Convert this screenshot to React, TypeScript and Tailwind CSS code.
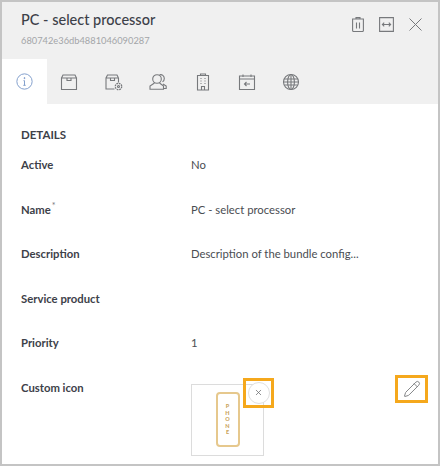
import { Pencil, X } from 'lucide-react';

const rows = [
  { label: 'Active', value: 'No' },
  { label: 'Name', value: 'PC - select processor', required: true },
  { label: 'Description', value: 'Description of the bundle config...' },
  { label: 'Service product', value: '' },
  { label: 'Priority', value: '1' },
];

const iconClass = 'w-[18px] h-[18px] text-[#77797c]';

function InfoIcon() {
  return (
    <svg viewBox="0 0 20 20" fill="none" stroke="#7c9ac9" strokeWidth="1.1" className="w-[17px] h-[17px]">
      <circle cx="10" cy="10" r="9" />
      <path d="M10 9v5.5M8.6 14.5h2.8M8.8 9H10" />
      <circle cx="10" cy="6" r="0.6" fill="#7c9ac9" />
    </svg>
  );
}

function BoxIcon() {
  return (
    <svg viewBox="0 0 18 18" fill="none" stroke="currentColor" strokeWidth="1.1" className={iconClass}>
      <path d="M1.5 5 3 2h12l1.5 3M1.5 5h15v11.5h-15z" />
      <path d="M7 5v2.5h4V5" />
    </svg>
  );
}

function BoxGearIcon() {
  return (
    <svg viewBox="0 0 18 18" fill="none" stroke="currentColor" strokeWidth="1.1" className={iconClass}>
      <path d="M1 5 2.500 2h9.500l1.500 3M13.500 5v4.500M9.500 16H1V5h12.500" />
      <path d="M5.500 5v2.500h4V5" />
      <circle cx="13.500" cy="13.500" r="3.200" strokeDasharray="1.700 0.800" strokeWidth="1.300" />
      <circle cx="13.500" cy="13.500" r="1" />
    </svg>
  );
}

function UsersIcon() {
  return (
    <svg viewBox="0 0 18 18" fill="none" stroke="currentColor" strokeWidth="1.1" className={iconClass}>
      <circle cx="8" cy="6" r="4.3" />
      <path d="M10.500 1.800c2.500-.8 4.800 1 4.800 3.600 0 1.500-.6 2.700-1.800 3.500M5.500 10 1 13v3.200h13.500V13L10.500 10M14 11l3.200 2v2.500h-2.700" />
    </svg>
  );
}

function BuildingIcon() {
  return (
    <svg viewBox="0 0 18 18" fill="none" stroke="currentColor" strokeWidth="1.1" className={iconClass}>
      <path d="M3.500 17V2.500h11V17zM6.500 2.500V1h5v1.500M7.500 17v-3.500h3V17" />
      <path d="M6.500 5.500h1M10.500 5.500h1M6.500 8h1M10.500 8h1M6.500 10.500h1M10.500 10.500h1" />
    </svg>
  );
}

function CalendarBackIcon() {
  return (
    <svg viewBox="0 0 18 18" fill="none" stroke="currentColor" strokeWidth="1.1" className={iconClass}>
      <path d="M1.500 3h15v13.500h-15zM1.500 6h15M5 1.500V4M13 1.500V4" />
      <path d="M12 11H6.500M8.500 9l-2 2 2 2" />
    </svg>
  );
}

function GlobeIcon() {
  return (
    <svg viewBox="0 0 18 18" fill="none" stroke="currentColor" strokeWidth="1.1" className={iconClass}>
      <circle cx="9" cy="9" r="7.5" />
      <ellipse cx="9" cy="9" rx="3.400" ry="7.500" />
      <path d="M9 1.500v15M2.200 6h13.600M1.500 9h15M2.200 12h13.600" />
    </svg>
  );
}

function TrashIcon() {
  return (
    <svg viewBox="0 0 12 15" fill="none" stroke="currentColor" strokeWidth="1.1" className="w-[12px] h-[15px] text-[#77797c]">
      <path d="M.6 2h10.800v11.500a1 1 0 0 1-1 1H1.600a1 1 0 0 1-1-1zM4 2V.6h4V2M4.500 5.500v6M7.500 5.500v6" />
    </svg>
  );
}

function FitIcon() {
  return (
    <svg viewBox="0 0 15 15" fill="none" stroke="currentColor" strokeWidth="1.1" className="w-[15px] h-[15px] text-[#77797c]">
      <path d="M.6.6h13.800v13.800H.6z" />
      <path d="M3.500 7.500h8M5.200 5.700 3.400 7.500l1.800 1.800M9.800 5.700l1.800 1.800-1.800 1.800" />
    </svg>
  );
}

function CloseIcon() {
  return (
    <svg viewBox="0 0 13 13" fill="none" stroke="currentColor" strokeWidth="1" className="w-[13px] h-[13px] text-[#77797c]">
      <path d="M.5.500l12 12M12.500.500l-12 12" />
    </svg>
  );
}

export default function App() {
  return (
    <div className="w-[440px] h-[466px] border-2 border-[#c4c4c4] bg-white overflow-hidden font-['Lato',sans-serif]">
      {/* Header */}
      <div className="h-[102px] bg-[#f0f0f0] flex flex-col justify-between">
        <div className="flex justify-between pl-[19px] pr-[16px] pt-[8px]">
          <div>
            <h1 className="text-[14.5px] leading-[20px] font-medium text-[#3d4149]">PC - select processor</h1>
            <p className="text-[9.3px] leading-[14px] mt-[4px] text-[#a3a5a8]">680742e36db4881046090287</p>
          </div>
          <div className="flex items-center gap-[15px] h-[28px]">
            <TrashIcon />
            <FitIcon />
            <CloseIcon />
          </div>
        </div>
        <div className="flex h-[45px] text-[#77797c]">
          <div className="w-[45px] bg-white flex items-center justify-center"><InfoIcon /></div>
          <div className="w-[44px] flex items-center justify-center"><BoxIcon /></div>
          <div className="w-[45px] flex items-center justify-center"><BoxGearIcon /></div>
          <div className="w-[44px] flex items-center justify-center"><UsersIcon /></div>
          <div className="w-[45px] flex items-center justify-center"><BuildingIcon /></div>
          <div className="w-[44px] flex items-center justify-center"><CalendarBackIcon /></div>
          <div className="w-[44px] flex items-center justify-center"><GlobeIcon /></div>
        </div>
      </div>

      {/* Details */}
      <div className="pl-[19px] pt-[23px]">
        <h2 className="text-[11.5px] leading-[16px] font-bold text-[#3d4149]">DETAILS</h2>
        <div className="mt-[14px]">
          {rows.map((row) => (
            <div key={row.label} className="flex h-[44.6px] text-[11.3px] leading-[16px]">
              <div className="w-[170px] font-bold text-[#3d4149]">
                {row.label}
                {row.required && <sup className="text-[9px] font-normal ml-[1px] text-[#77797c]">*</sup>}
              </div>
              <div className="text-[#4a4d52]">{row.value}</div>
            </div>
          ))}
          <div className="flex text-[11.3px] leading-[16px]">
            <div className="w-[170px] font-bold text-[#3d4149]">Custom icon</div>
            <div className="relative w-[73px] h-[72px] mt-[4px] border border-[#dcdcdc] flex items-center justify-center">
              <div className="w-[24px] h-[55px] border-2 border-[#e6c88d] rounded-[4px] flex items-center justify-center">
                <span className="[writing-mode:vertical-lr] [text-orientation:upright] text-[5.5px] leading-[8px] font-black tracking-[0.6px] text-[#c9a45c]">PHONE</span>
              </div>
              <div className="absolute left-[51px] top-[-7px] w-[31px] h-[30px] border-[3px] border-[#f5a81c] flex items-center justify-center">
                <div className="w-[22px] h-[22px] rounded-full bg-white border border-[#e0e0e0] flex items-center justify-center">
                  <X className="w-[9px] h-[9px] text-[#6b6d70]" strokeWidth={2} />
                </div>
              </div>
            </div>
            <div className="ml-[131px] -mt-[5px] w-[33px] h-[28px] border-[3px] border-[#f5a81c] flex items-center justify-center">
              <Pencil className="w-[18px] h-[18px] text-[#77797c]" strokeWidth={1.2} />
            </div>
          </div>
        </div>
      </div>
    </div>
  );
}
